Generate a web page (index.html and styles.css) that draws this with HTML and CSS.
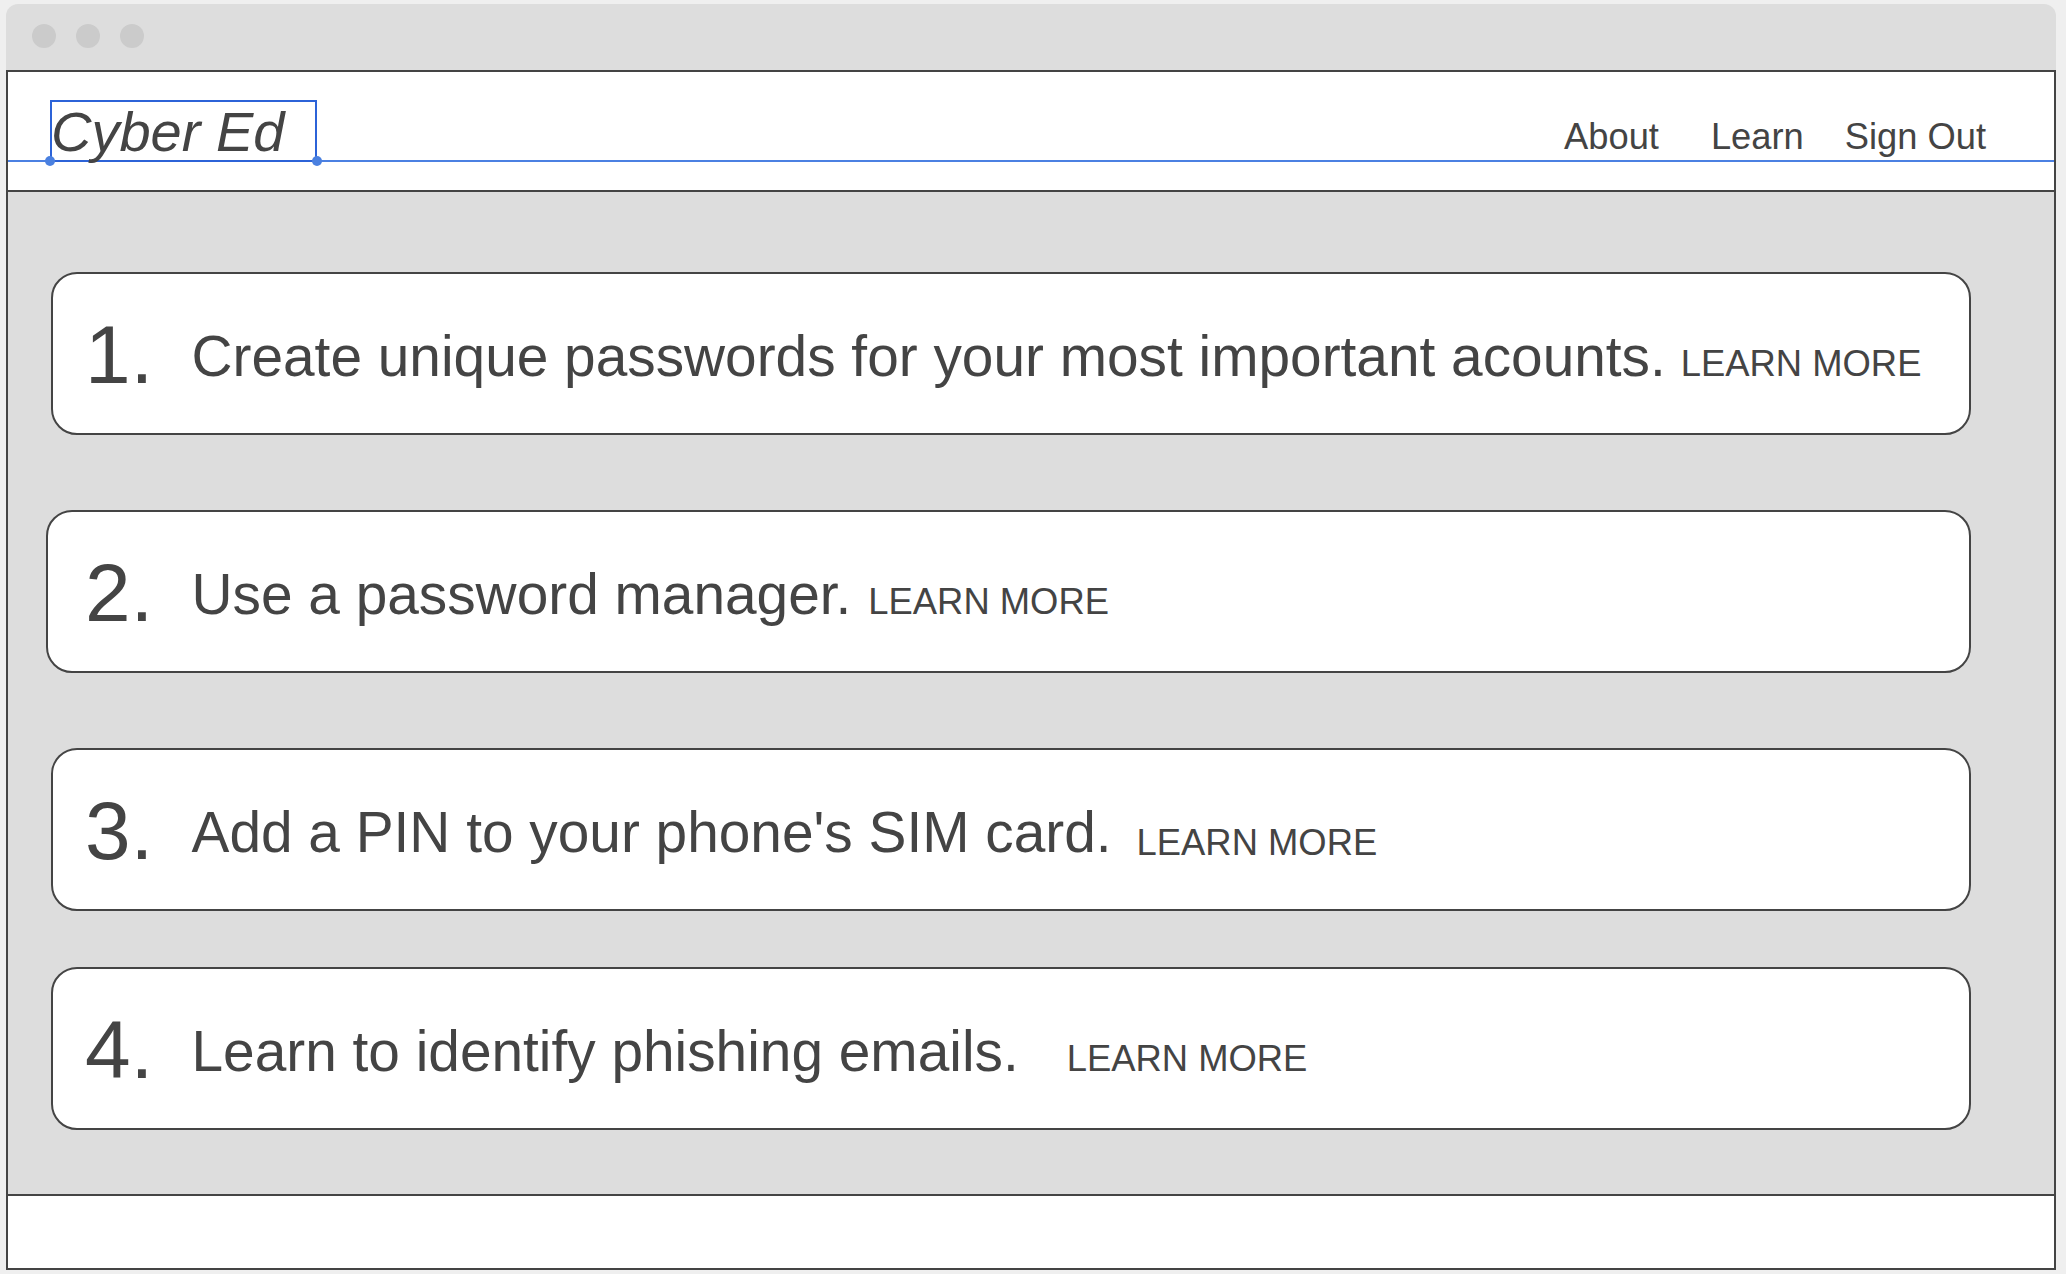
FILE: index.html
```html
<!DOCTYPE html>
<html lang="en">
<head>
<meta charset="utf-8">
<title>Cyber Ed</title>
<link rel="stylesheet" href="styles.css">
</head>
<body>
<div class="window">
  <div class="titlebar">
    <span class="dot"></span><span class="dot"></span><span class="dot"></span>
  </div>
  <div class="frame">
    <header class="header">
      <div class="logo">Cyber Ed</div>
      <nav class="nav">
        <a class="nav-link nav-about">About</a>
        <a class="nav-link nav-learn">Learn</a>
        <a class="nav-link nav-signout">Sign Out</a>
      </nav>
      <div class="guide"></div>
    </header>
    <main class="main">
      <div class="card card-1">
        <span class="num">1.</span><span class="tip">Create unique passwords for your most important acounts.</span><a class="more more-1">LEARN MORE</a>
      </div>
      <div class="card card-2">
        <span class="num">2.</span><span class="tip">Use a password manager.</span><a class="more more-2">LEARN MORE</a>
      </div>
      <div class="card card-3">
        <span class="num">3.</span><span class="tip">Add a PIN to your phone's SIM card.</span><a class="more more-3">LEARN MORE</a>
      </div>
      <div class="card card-4">
        <span class="num">4.</span><span class="tip">Learn to identify phishing emails.</span><a class="more more-4">LEARN MORE</a>
      </div>
    </main>
    <footer class="footer"></footer>
  </div>
</div>
</body>
</html>
```
FILE: styles.css
```css
* { box-sizing: border-box; }

html, body {
  margin: 0;
  padding: 0;
  background: #efefef;
  width: 2066px;
  height: 1274px;
  overflow: hidden;
  font-family: "Liberation Sans", Arial, sans-serif;
  color: #444444;
}

.window {
  margin: 4px 0 0 6px;
  width: 2050px;
}

.titlebar {
  height: 66px;
  background: #dddddd;
  border-radius: 12px 12px 0 0;
  display: flex;
  gap: 20px;
  padding: 20px 0 0 26px;
}

.dot {
  width: 24px;
  height: 24px;
  border-radius: 50%;
  background: #cbcbcb;
}

.frame {
  border: 2px solid #444444;
  background: #ffffff;
}

/* header */
.header {
  position: relative;
  height: 120px;
  border-bottom: 2px solid #444444;
  background: #ffffff;
  display: flex;
  align-items: flex-start;
  padding: 28px 0 0 42px;
}

.logo {
  position: relative;
  width: 267px;
  height: 62px;
  border: 2px solid #2c63d8;
  font-style: italic;
  font-size: 56px;
  line-height: 56px;
  padding-top: 2px;
  text-indent: -1px;
  color: #444444;
  white-space: nowrap;
  z-index: 2;
}

.logo::before,
.logo::after {
  content: "";
  position: absolute;
  top: 54px;
  width: 10px;
  height: 10px;
  border-radius: 50%;
  background: #4a80e0;
}
.logo::before { left: -7px; }
.logo::after { left: 260px; }

.guide {
  position: absolute;
  left: 0;
  right: 0;
  top: 88px;
  height: 2px;
  background: #4b80e2;
  z-index: 1;
}

.nav {
  margin-left: auto;
  margin-top: 16.5px;
  padding-right: 68px;
  display: flex;
  align-items: baseline;
  font-size: 36.3px;
  line-height: 40px;
}

.nav-link {
  color: #444444;
  text-decoration: none;
}
.nav-learn { margin-left: 52px; }
.nav-signout { margin-left: 41px; }

/* main */
.main {
  height: 1004px;
  background: #dddddd;
  border-bottom: 2px solid #444444;
  padding: 80px 0 0 43px;
  display: flex;
  flex-direction: column;
}

.card {
  width: 1920px;
  height: 163px;
  background: #ffffff;
  border: 2px solid #444444;
  border-radius: 26px;
  padding: 61px 0 0 32px;
  font-size: 56.8px;
  line-height: 40px;
  white-space: nowrap;
}

.card-2 {
  margin-top: 75px;
  margin-left: -5px;
  width: 1925px;
  padding-left: 37px;
}
.card-3 { margin-top: 75px; }
.card-4 { margin-top: 56px; }

.num {
  display: inline-block;
  width: 106.5px;
  font-size: 82px;
  line-height: 40px;
  vertical-align: -7px;
}

.tip {
  font-size: 56.8px;
  line-height: 40px;
}

.more {
  font-size: 36.4px;
  line-height: 40px;
  color: #444444;
  text-decoration: none;
}
.more-1 { margin-left: 15px; }
.more-2 { margin-left: 17px; }
.more-3 { margin-left: 25px; vertical-align: -3px; }
.more-4 { margin-left: 48px; }

/* footer */
.footer {
  height: 72px;
  background: #ffffff;
}
```
